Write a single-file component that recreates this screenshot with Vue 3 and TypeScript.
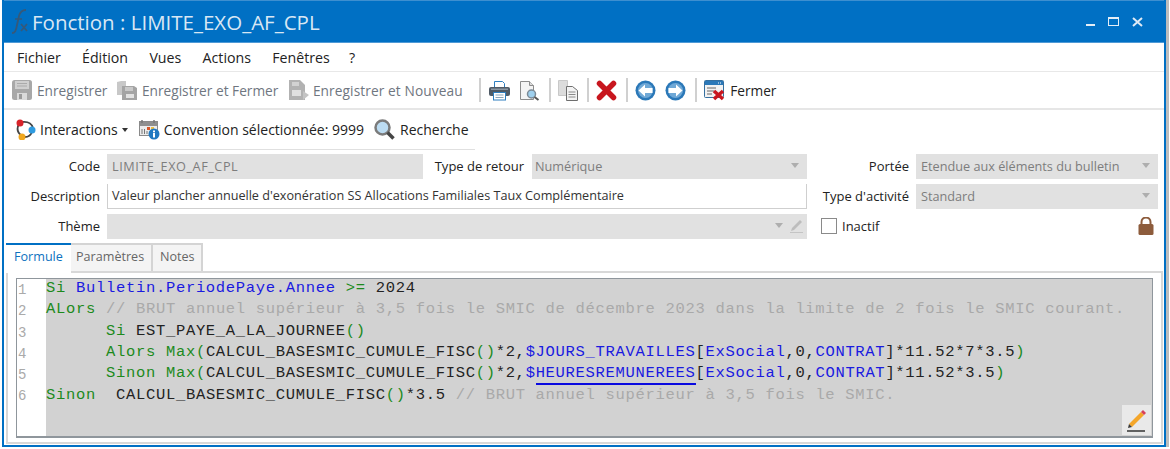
<script setup lang="ts">
const menus = ['Fichier', 'Édition', 'Vues', 'Actions', 'Fenêtres', '?']
</script>

<template>
  <div class="win">
    <header class="title">
      <svg class="fx" width="22" height="26" viewBox="0 0 22 26"><path d="M2 24c3 0 4-2 5-8l2-9c1-4 3-6 7-6" fill="none" stroke="#35597a" stroke-width="1.800"/><path d="M5 10h7" stroke="#35597a" stroke-width="1.500"/><path d="M11 15l6 7M17 15l-6 7" stroke="#35597a" stroke-width="1.800"/></svg>
      <span class="title-text">Fonction : LIMITE_EXO_AF_CPL</span>
      <div class="wbtns">
        <i class="wmin"></i><i class="wmax"></i>
        <svg width="11" height="10" viewBox="0 0 11 10"><path d="M1 1l9 8M10 1l-9 8" stroke="#dfeaf5" stroke-width="2"/></svg>
      </div>
    </header>
    <div class="body">
      <nav class="menu"><span v-for="m in menus" :key="m">{{ m }}</span></nav>
      <div class="toolbar">
        <span class="tb dis">
          <svg width="20" height="20" viewBox="0 0 20 20"><rect x="0" y="0" width="20" height="20" rx="2.500" fill="#a8a8a8"/><rect x="3" y="1" width="14" height="8" fill="#cfcfcf"/><path d="M5 3.500h10M5 6h10" stroke="#aaa"/><rect x="5" y="13" width="10" height="7" fill="#dadada"/><rect x="7" y="14" width="3" height="5" fill="#9a9a9a"/></svg>
          Enregistrer
        </span>
        <span class="tb dis">
          <svg width="20" height="20" viewBox="0 0 20 20"><path d="M0 2l4-1 5 0v14H0z" fill="#c8c8c8"/><path d="M5 6h12l3 2v12H5z" fill="#a4a4a4"/><rect x="8" y="7" width="8" height="4" fill="#c9c9c9"/><rect x="9" y="14" width="8" height="4" fill="#e2e2e2"/></svg>
          Enregistrer et Fermer
        </span>
        <span class="tb dis third">
          <svg width="21" height="20" viewBox="0 0 21 20"><path d="M1 0h11l5 5v15H1z" fill="#b2b2b2"/><rect x="4" y="2" width="7" height="4" fill="#d2d2d2"/><rect x="4" y="10" width="9" height="6" fill="#e0e0e0"/><path d="M15 11l6 4-6 5z" fill="#c4c4c4"/></svg>
          Enregistrer et Nouveau
        </span>
        <i class="sep first"></i>
        <svg class="ico" width="21" height="21" viewBox="0 0 21 21"><path d="M5.500 7V1.500h8l2 2V7" fill="#fff" stroke="#2f7fc0"/><rect x="0" y="7" width="21" height="9" rx="2" fill="#4f5a66"/><rect x="2" y="8.500" width="17" height="1.500" fill="#8a96a2"/><rect x="4.500" y="12.500" width="12" height="7.500" fill="#fff" stroke="#2f7fc0"/><path d="M6.500 15h8M6.500 17.500h8" stroke="#8aa4ba"/></svg>
        <svg class="ico" width="21" height="21" viewBox="0 0 21 21"><path d="M1.500 1.500h9l4 4v14h-13z" fill="#f4f4f4" stroke="#8c8c8c"/><path d="M10.500 1.500v4h4" fill="#ddd" stroke="#8c8c8c"/><circle cx="12.500" cy="14" r="4" fill="#9fd0ee" stroke="#7c8a96" stroke-width="1.500"/><path d="M15.500 17l4 3" stroke="#555" stroke-width="2"/></svg>
        <i class="sep"></i>
        <svg class="ico" width="20" height="21" viewBox="0 0 20 21"><path d="M.5 .5h9v15h-9z" fill="#dcdcdc" stroke="#c8c8c8"/><path d="M8.500 6.500h6l5 4v10h-11z" fill="#f3f3f3" stroke="#6e6e6e"/><path d="M10.500 12h7M10.500 14.500h7M10.500 17h7" stroke="#8a8a8a"/></svg>
        <i class="sep"></i>
        <svg class="ico" width="21" height="21" viewBox="0 0 21 21"><path d="M3.500 3.500l14 14M17.500 3.500l-14 14" stroke="#c8161e" stroke-width="5.500" stroke-linecap="round"/></svg>
        <i class="sep"></i>
        <svg class="ico" width="21" height="21" viewBox="0 0 21 21"><circle cx="10.500" cy="10.500" r="10" fill="#2b78b8"/><circle cx="10.500" cy="10.500" r="7.500" fill="#6fa8d6"/><path d="M3.500 10.500l6.500-6v3.500h7.500v5h-7.500v3.500z" fill="#fff"/></svg>
        <svg class="ico" width="21" height="21" viewBox="0 0 21 21"><circle cx="10.500" cy="10.500" r="10" fill="#2b78b8"/><circle cx="10.500" cy="10.500" r="7.500" fill="#6fa8d6"/><path d="M17.500 10.500l-6.500-6v3.500h-7.500v5h7.500v3.500z" fill="#fff"/></svg>
        <i class="sep"></i>
        <span class="tb">
          <svg width="21" height="21" viewBox="0 0 21 21"><rect x="0.500" y="0.500" width="19" height="17" rx="1" fill="#f2f2f2" stroke="#356f9f"/><rect x="1" y="1" width="18" height="4" fill="#2b78b8"/><path d="M14 3h1M16 3h1" stroke="#fff"/><path d="M3 8h9M3 11h7M3 14h5" stroke="#666"/><path d="M10 11l9 8M19 11l-9 8" stroke="#c8161e" stroke-width="3.500"/></svg>
          Fermer
        </span>
      </div>
      <div class="toolbar2">
        <span class="tb">
          <svg width="21" height="21" viewBox="0 0 21 21"><path d="M4 5Q0 12 7 17M7 3q9-1 11 6M17 13q-2 5-7 5" fill="none" stroke="#444" stroke-width="1.800"/><circle cx="5" cy="4" r="3.500" fill="#d8232a"/><circle cx="17" cy="11" r="3.500" fill="#2f9be0"/><circle cx="7" cy="18" r="3.500" fill="#f0a820"/></svg>
          Interactions<i class="caret"></i>
        </span>
        <span class="tb">
          <svg width="21" height="21" viewBox="0 0 21 21"><rect x="0.500" y="2.500" width="18" height="14" fill="#ececec" stroke="#8a8a8a"/><rect x="1" y="3" width="17" height="4" fill="#8f8f8f"/><path d="M3 1v3M15 1v3" stroke="#777" stroke-width="1.500"/><rect x="8" y="8" width="3" height="3" fill="#d8562a"/><rect x="12" y="8" width="3" height="3" fill="#f0c040"/><path d="M3 10v5M5.500 10v5M8 12v3" stroke="#777"/><circle cx="15" cy="15" r="5.500" fill="#1f78c1"/><rect x="14" y="14" width="2" height="4.500" fill="#fff"/><rect x="14" y="11.500" width="2" height="1.800" fill="#fff"/></svg>
          Convention sélectionnée: 9999
        </span>
        <span class="tb last">
          <svg width="21" height="21" viewBox="0 0 21 21"><circle cx="8.500" cy="8.500" r="7" fill="#bcdcf2" stroke="#7b7b7b" stroke-width="2.500"/><path d="M13.500 13.500l6 6" stroke="#454545" stroke-width="3.500"/></svg>
          Recherche
        </span>
      </div>

      <div class="form">
        <label class="lbl">Code</label>
        <div class="field ro caps">LIMITE_EXO_AF_CPL</div>
        <label class="lbl tr">Type de retour</label>
        <div class="field ro num">Numérique<i class="arrow"></i></div>
        <label class="lbl">Portée</label>
        <div class="field ro">Etendue aux éléments du bulletin<i class="arrow"></i></div>

        <label class="lbl">Description</label>
        <div class="field desc">Valeur plancher annuelle d'exonération SS Allocations Familiales Taux Complémentaire</div>
        <label class="lbl">Type d'activité</label>
        <div class="field ro">Standard<i class="arrow"></i></div>

        <label class="lbl">Thème</label>
        <div class="field ro wide">
          <i class="arrow"></i>
          <svg class="pen" width="15" height="15" viewBox="0 0 15 15"><path d="M3 10l8-8 2 2-8 8-3 1z" fill="#bdbdbd"/><path d="M1 14.500h13" stroke="#c4c4c4"/></svg>
        </div>
        <div class="chk">
          <span class="box"></span><span>Inactif</span>
          <svg class="lock" width="16" height="18" viewBox="0 0 16 18"><path d="M3.500 8V5a4.500 4.500 0 0 1 9 0v3" fill="none" stroke="#8d5c3c" stroke-width="2"/><rect x="0.500" y="7" width="15" height="11" rx="1.500" fill="#8d5c3c"/></svg>
        </div>
      </div>

      <div class="tabs">
        <span class="tab on">Formule</span>
        <span class="tab p">Paramètres</span>
        <span class="tab n">Notes</span>
      </div>
      <div class="pane">
        <div class="editor">
          <div class="nums"><span>1</span><span>2</span><span>3</span><span>4</span><span>5</span><span>6</span></div>
          <pre class="code"><b class="g">Si</b> <b class="bl">Bulletin.PeriodePaye.Annee</b> <b class="g">&gt;=</b> 2024
<b class="g">ALors</b> <b class="c">// BRUT annuel supérieur à 3,5 fois le SMIC de décembre 2023 dans la limite de 2 fois le SMIC courant.</b>
      <b class="g">Si</b> EST_PAYE_A_LA_JOURNEE<b class="g">()</b>
      <b class="g">Alors Max(</b>CALCUL_BASESMIC_CUMULE_FISC<b class="g">()</b>*2,<b class="bl">$JOURS_TRAVAILLES</b>[<b class="bl">ExSocial</b>,0,<b class="bl">CONTRAT</b>]*11.52*7*3.5<b class="g">)</b>
      <b class="g">Sinon Max(</b>CALCUL_BASESMIC_CUMULE_FISC<b class="g">()</b>*2,<b class="bl">$<b class="ul">HEURESREMUNEREES</b></b>[<b class="bl">ExSocial</b>,0,<b class="bl">CONTRAT</b>]*11.52*3.5<b class="g">)</b>
<b class="g">Sinon</b>  CALCUL_BASESMIC_CUMULE_FISC<b class="g">()</b>*3.5 <b class="c">// BRUT annuel supérieur à 3,5 fois le SMIC.</b></pre>
          <span class="edit">
            <svg width="22" height="24" viewBox="0 0 22 24"><path d="M3 16L15 4l3 3L6 19z" fill="#f4a62a"/><path d="M15 4l2-2 3 3-2 2z" fill="#d8405a"/><path d="M3 16l-1 4 4-1z" fill="#3a3a3a"/><path d="M1 23h18" stroke="#333" stroke-width="1.500"/></svg>
          </span>
        </div>
      </div>
    </div>
  </div>
</template>

<style>
html, body { margin: 0; background: #fff; }
</style>

<style scoped>
.win {
  width: 1164px; height: 447px; margin-left: 2px; box-sizing: border-box;
  background: #0070c4; border: solid #0070c4; border-width: 0 2px 2px;
  box-shadow: 3px 0 0 #bdbdbd;
  display: flex; flex-direction: column;
  font-family: "Open Sans", "Noto Sans", sans-serif; font-size: 14px; color: #222;
}
.title { height: 43px; flex: none; box-sizing: border-box; display: flex; align-items: center; color: #d8e7f4; padding: 0 21px 0 6px; border-top: 1px solid #3d8fd0; border-bottom: 1px solid #4f9ad6; }
.title-text { font-size: 20.500px; }
.wbtns { margin-left: auto; display: flex; align-items: center; gap: 13px; }
.wmin { width: 9px; height: 2px; background: #e4eef7; margin-top: 7px; }
.wmax { width: 9px; height: 6px; border: 1px solid #e4eef7; border-top-width: 2px; }
.body { flex: 1; background: #fff; display: flex; flex-direction: column; min-height: 0; }
.menu { height: 29px; flex: none; box-sizing: border-box; display: flex; align-items: center; gap: 21.300px; padding-left: 13px; border-bottom: 1px solid #e8e8e8; font-size: 14.200px; }
.menu span:last-child { margin-left: -2px; }
.toolbar { height: 38px; flex: none; display: flex; align-items: center; padding-left: 8px; border-bottom: 2px solid #e6e6e6; box-sizing: border-box; font-size: 13.700px; }
.tb { display: inline-flex; align-items: center; gap: 5px; margin-right: 9.500px; white-space: nowrap; }
.third { gap: 4px; letter-spacing: 0.100px; }
.dis { color: #6f7680; }
.sep { width: 2px; height: 24px; background: #d0d0d0; margin-right: 7px; }
.sep.first { margin-left: 7px; margin-right: 8px; }
.ico { margin-right: 9px; }
.toolbar2 { height: 39px; flex: none; display: flex; align-items: center; padding-left: 11px; box-sizing: border-box; }
.toolbar2 .tb { gap: 4px; margin-right: 10px; }
.toolbar2 .tb:first-child { margin-right: 11px; }
.toolbar2 .last { gap: 5px; }
.caret { width: 0; height: 0; border: 3.500px solid transparent; border-top: 4px solid #333; border-bottom: 0; }
.form {
  flex: none; position: relative;
  display: grid; grid-template-columns: 103px 316px 109px 275px 109px 242px; grid-auto-rows: 25px; row-gap: 5px;
  align-items: center; box-sizing: border-box; height: 94px; padding-top: 5px; font-size: 13px;
  background: linear-gradient(#e0e0e0, #e0e0e0) no-repeat 0 0 / 471px 1px;
}
.lbl { text-align: right; padding: 0 7px 2px 0; white-space: nowrap; }
.lbl.tr { padding-right: 8px; }
.field { height: 25px; box-sizing: border-box; padding: 0 8px 2px 5px; font-size: 12.700px; white-space: nowrap; display: flex; align-items: center; }
.caps { letter-spacing: 0.550px; }
.num { padding-left: 3px; }
.ro { background: #e1e1e1; color: #7d7d7d; }
.desc { grid-column: 2 / span 3; border: solid #cfcfcf; border-width: 0 1px 1px 1px; color: #333; padding-left: 4px; background: #fff; font-size: 12.650px; }
.wide { grid-column: 2 / span 3; padding-right: 3px; }
.arrow { margin-left: auto; width: 0; height: 0; border: 4px solid transparent; border-top: 5px solid #aeaeae; border-bottom: 0; }
.pen { margin-left: 6px; }
.chk { grid-column: 5 / span 2; display: flex; align-items: center; gap: 5px; padding: 0 0 2px 14px; }
.box { width: 14px; height: 14px; border: 1px solid #8a8a8a; background: #fff; flex: none; }
.lock { margin-left: auto; margin-right: 4px; }
.tabs { display: flex; align-items: flex-end; height: 28px; flex: none; padding-left: 2px; }
.tab { box-sizing: border-box; height: 28px; padding-left: 5px; line-height: 24px; background: #f4f4f4; color: #666; border: 2px solid #d4d4d4; border-left: 0; border-bottom: 0; font-size: 12.600px; }
.tab.p { width: 82px; }
.tab.n { width: 50px; padding-left: 7px; }
.tab.on { background: #fff; color: #0d72bf; border: 0; border-top: 2px solid #0070c4; width: 65px; padding-left: 8px; height: 30px; position: relative; top: 2px; z-index: 1; }
.pane { flex: 1; margin: 0 1px 1px 2px; padding: 5px 8px 4px; border: 2px solid #d8d8d8; min-height: 0; display: flex; box-sizing: border-box; }
.editor { flex: 1; border: 1px solid #8f969c; border-bottom-width: 2px; display: flex; position: relative; background: #d2d2d2; overflow: hidden; }
.nums { width: 29px; background: #fff; display: flex; flex-direction: column; color: #aaa; font: 14px/21.300px "Liberation Mono", monospace; padding: 1px 0 0 1px; flex: none; box-sizing: border-box; }
.nums span { height: 21.300px; }
.code { margin: -1px 0 0; font: 15.500px/21.350px "Liberation Mono", monospace; letter-spacing: 0.690px; color: #222; }
.code b { font-weight: 400; }
.g { color: #1c8a1c; }
.bl { color: #1a1ae0; }
.c { color: #a9a9a9; }
.ul { padding-bottom: 1px; border-bottom: 2px solid #0a0ae0; }
.edit { position: absolute; right: 1px; bottom: 1px; width: 29px; height: 30px; background: #e9e9e9; display: flex; align-items: center; justify-content: center; }
</style>
